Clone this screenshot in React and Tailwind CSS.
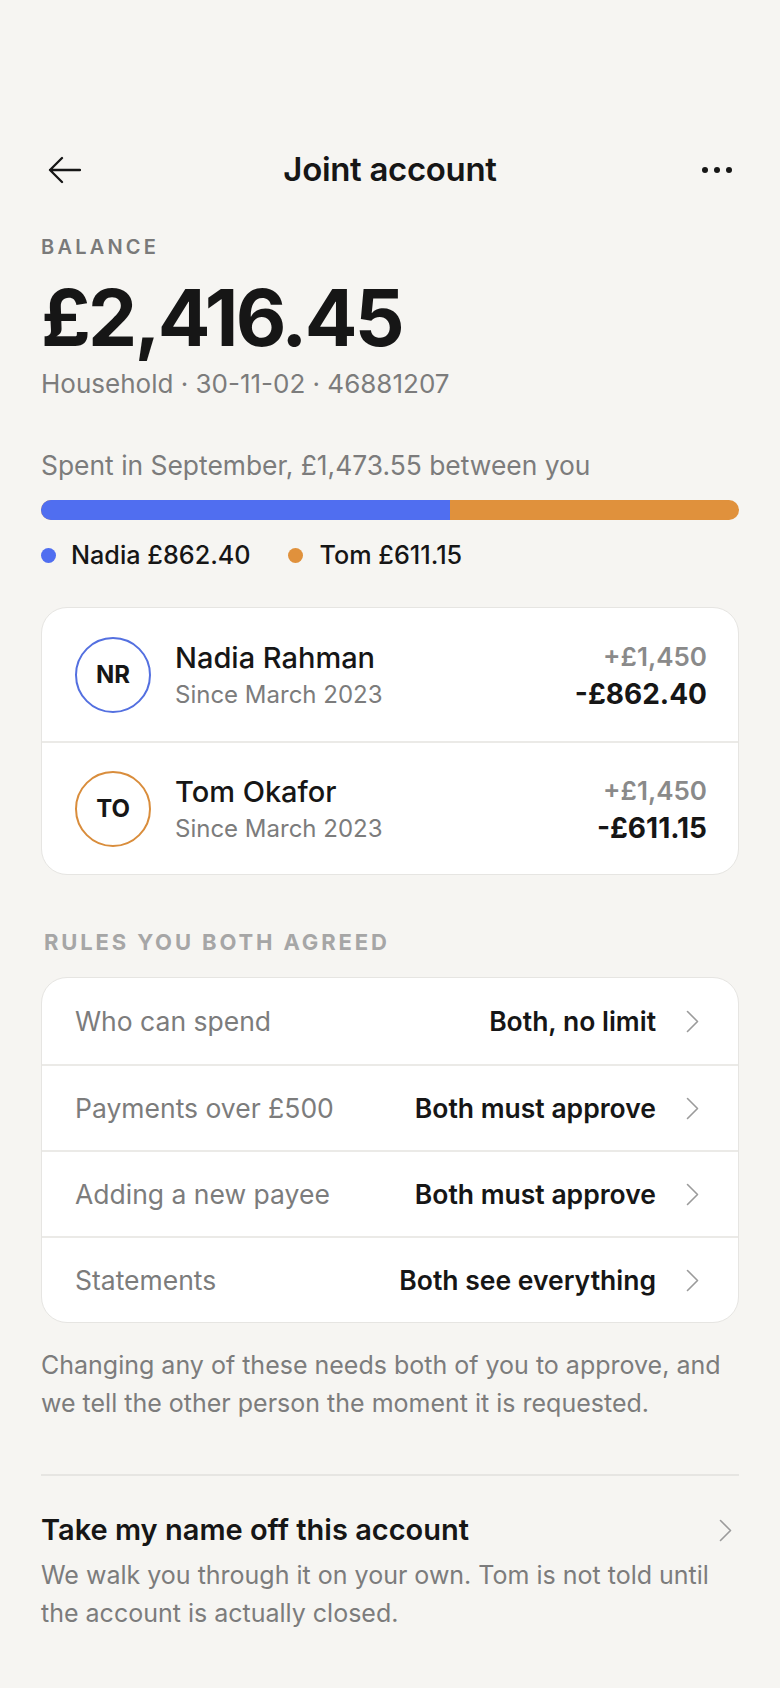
import React from 'react';

const font = { fontFamily: 'Inter, "Noto Sans", sans-serif' };

const Chevron = ({ className = '' }) => (
  <svg width="13" height="23" viewBox="0 0 13 23" fill="none" className={className}>
    <path d="M1.5 1.5 L11.5 11.5 L1.5 21.5" stroke="#9b9b9b" strokeWidth="1.6" strokeLinecap="round" strokeLinejoin="round" />
  </svg>
);

const members = [
  { initials: 'NR', name: 'Nadia Rahman', since: 'Since March 2023', in: '+£1,450', out: '-£862.40', ring: 'border-[#5470e0]' },
  { initials: 'TO', name: 'Tom Okafor', since: 'Since March 2023', in: '+£1,450', out: '-£611.15', ring: 'border-[#d98d3c]' },
];

const rules = [
  { label: 'Who can spend', value: 'Both, no limit' },
  { label: 'Payments over £500', value: 'Both must approve' },
  { label: 'Adding a new payee', value: 'Both must approve' },
  { label: 'Statements', value: 'Both see everything' },
];

export default function App() {
  const nadia = 862.4;
  const total = 1473.55;

  return (
    <div className="min-h-[1688px] w-full bg-[#f6f5f2] px-[41px] pt-[142px] text-[#161616]" style={font}>
      {/* header */}
      <div className="grid h-[56px] grid-cols-[60px_1fr_60px] items-center">
        <button className="flex h-full items-center pl-[7px]">
          <svg width="33" height="28" viewBox="0 0 33 28" fill="none">
            <path d="M32 14 H2 M14 2 L2 14 L14 26" stroke="#161616" strokeWidth="2.3" strokeLinecap="round" strokeLinejoin="round" />
          </svg>
        </button>
        <h1 className="text-center text-[33px] font-semibold tracking-[-0.01em]">Joint account</h1>
        <button className="flex h-full items-center justify-end gap-[6px] pr-[7px]">
          <span className="h-[6px] w-[6px] rounded-full bg-[#161616]" />
          <span className="h-[6px] w-[6px] rounded-full bg-[#161616]" />
          <span className="h-[6px] w-[6px] rounded-full bg-[#161616]" />
        </button>
      </div>

      {/* balance */}
      <div className="mt-[39px] text-[20px] font-semibold leading-[20px] tracking-[0.16em] text-[#7a7a7a]">BALANCE</div>
      <div className="mt-[22px] text-[78px] font-bold leading-[78px] tracking-[-0.035em]">£2,416.45</div>
      <div className="mt-[11px] text-[26px] leading-[32px] text-[#7c7c7c]">Household · 30-11-02 · 46881207</div>

      {/* spending */}
      <div className="mt-[49px] text-[26.4px] leading-[32px] text-[#7c7c7c]">Spent in September, £1,473.55 between you</div>
      <div className="mt-[19px] flex h-[20px] overflow-hidden rounded-full bg-[#e0913c]">
        <div className="h-full bg-[#506ef0]" style={{ width: `${(nadia / total) * 100}%` }} />
      </div>
      <div className="mt-[19px] flex items-center text-[25.2px] font-medium leading-[32px]">
        <span className="h-[15px] w-[15px] rounded-full bg-[#506ef0]" />
        <span className="ml-[15px]">Nadia £862.40</span>
        <span className="ml-[37px] h-[15px] w-[15px] rounded-full bg-[#e0913c]" />
        <span className="ml-[17px]">Tom £611.15</span>
      </div>

      {/* members */}
      <div className="mt-[36px] overflow-hidden rounded-[26px] border border-[#e6e5e2] bg-white">
        {members.map((m, i) => (
          <div key={m.initials} className={`flex h-[133px] items-center pl-[33px] pr-[31px] ${i > 0 ? 'border-t-2 border-[#ebeae7]' : ''}`}>
            <div className={`flex h-[76px] w-[76px] shrink-0 items-center justify-center rounded-full border-2 ${m.ring} text-[24px] font-bold`}>
              {m.initials}
            </div>
            <div className="ml-[24px] mt-[5px] flex-1">
              <div className="text-[29px] font-medium leading-[36px]">{m.name}</div>
              <div className="text-[24px] leading-[38px] text-[#7c7c7c]">{m.since}</div>
            </div>
            <div className="mt-[3px] text-right">
              <div className="text-[26px] font-semibold leading-[36px] text-[#8a8a8a]">{m.in}</div>
              <div className="text-[28px] font-bold leading-[38px]">{m.out}</div>
            </div>
          </div>
        ))}
      </div>

      {/* rules */}
      <div className="mt-[54px] pl-[3px] text-[22px] font-bold leading-[26px] tracking-[0.13em] text-[#a6a6a6]">RULES YOU BOTH AGREED</div>
      <div className="mt-[22px] overflow-hidden rounded-[26px] border border-[#e6e5e2] bg-white">
        {rules.map((r, i) => (
          <div key={r.label} className={`flex h-[86px] items-center pl-[33px] pr-[39px] ${i > 0 ? 'border-t-2 border-[#ebeae7]' : ''}`}>
            <div className="flex-1 text-[26.5px] leading-[32px] text-[#7c7c7c]">{r.label}</div>
            <div className="text-[26.5px] font-semibold leading-[32px]">{r.value}</div>
            <Chevron className="ml-[30px]" />
          </div>
        ))}
      </div>

      <p className="mt-[23px] text-[25px] leading-[38px] text-[#7c7c7c]">
        Changing any of these needs both of you to approve, and we tell the other person the moment it is requested.
      </p>

      <div className="mt-[52px] border-t-2 border-[#e6e5e2]" />

      {/* leave */}
      <div className="mt-[37px] flex items-center justify-between">
        <div className="text-[29px] font-semibold leading-[34px]">Take my name off this account</div>
        <Chevron className="mr-[7px]" />
      </div>
      <p className="mt-[9px] pr-[20px] text-[25px] leading-[38px] text-[#7c7c7c]">
        We walk you through it on your own. Tom is not told until the account is actually closed.
      </p>
    </div>
  );
}
